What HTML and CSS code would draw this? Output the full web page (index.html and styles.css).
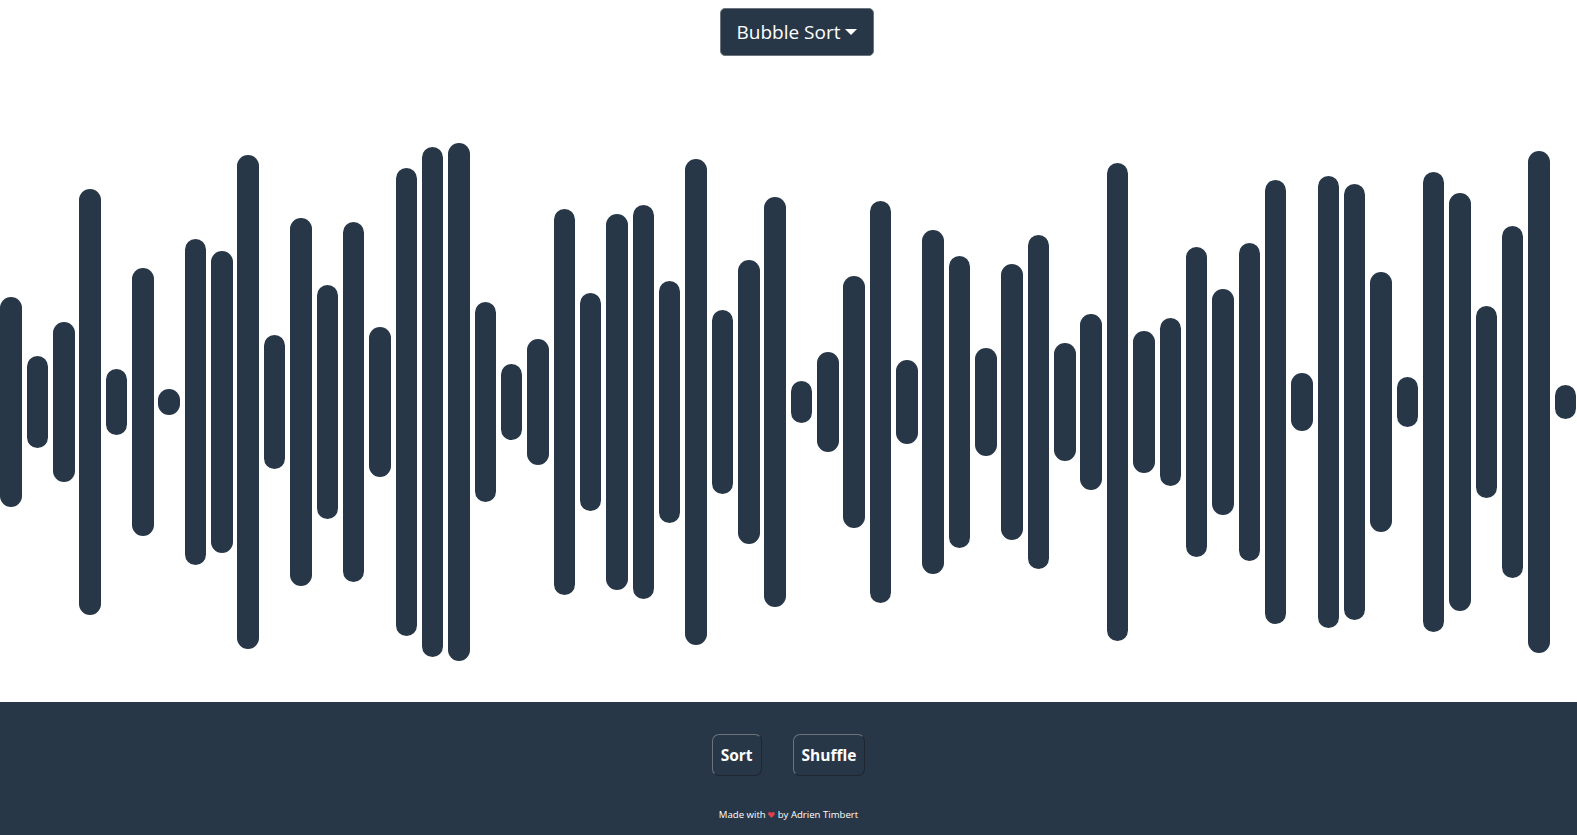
FILE: index.html
```html
<!DOCTYPE html>
<html lang="en">
<head>
    <meta charset="UTF-8">
    <meta name="viewport" content="width=device-width, initial-scale=1.0">
    <title>Sorting Visualizer</title>
    <link rel="stylesheet" href="styles.css">
</head>
<body>

    <header class="top-bar">
        <button type="button" class="algo-dropdown">Bubble Sort<span class="caret"></span></button>
    </header>

    <main class="bars">
        <div class="bar" style="--v: 25"></div>
        <div class="bar" style="--v: 11"></div>
        <div class="bar" style="--v: 19"></div>
        <div class="bar" style="--v: 51"></div>
        <div class="bar" style="--v: 8"></div>
        <div class="bar" style="--v: 32"></div>
        <div class="bar" style="--v: 3"></div>
        <div class="bar" style="--v: 39"></div>
        <div class="bar" style="--v: 36"></div>
        <div class="bar" style="--v: 59"></div>
        <div class="bar" style="--v: 16"></div>
        <div class="bar" style="--v: 44"></div>
        <div class="bar" style="--v: 28"></div>
        <div class="bar" style="--v: 43"></div>
        <div class="bar" style="--v: 18"></div>
        <div class="bar" style="--v: 56"></div>
        <div class="bar" style="--v: 61"></div>
        <div class="bar" style="--v: 62"></div>
        <div class="bar" style="--v: 24"></div>
        <div class="bar" style="--v: 9"></div>
        <div class="bar" style="--v: 15"></div>
        <div class="bar" style="--v: 46"></div>
        <div class="bar" style="--v: 26"></div>
        <div class="bar" style="--v: 45"></div>
        <div class="bar" style="--v: 47"></div>
        <div class="bar" style="--v: 29"></div>
        <div class="bar" style="--v: 58"></div>
        <div class="bar" style="--v: 22"></div>
        <div class="bar" style="--v: 34"></div>
        <div class="bar" style="--v: 49"></div>
        <div class="bar" style="--v: 5"></div>
        <div class="bar" style="--v: 12"></div>
        <div class="bar" style="--v: 30"></div>
        <div class="bar" style="--v: 48"></div>
        <div class="bar" style="--v: 10"></div>
        <div class="bar" style="--v: 41"></div>
        <div class="bar" style="--v: 35"></div>
        <div class="bar" style="--v: 13"></div>
        <div class="bar" style="--v: 33"></div>
        <div class="bar" style="--v: 40"></div>
        <div class="bar" style="--v: 14"></div>
        <div class="bar" style="--v: 21"></div>
        <div class="bar" style="--v: 57"></div>
        <div class="bar" style="--v: 17"></div>
        <div class="bar" style="--v: 20"></div>
        <div class="bar" style="--v: 37"></div>
        <div class="bar" style="--v: 27"></div>
        <div class="bar" style="--v: 38"></div>
        <div class="bar" style="--v: 53"></div>
        <div class="bar" style="--v: 7"></div>
        <div class="bar" style="--v: 54"></div>
        <div class="bar" style="--v: 52"></div>
        <div class="bar" style="--v: 31"></div>
        <div class="bar" style="--v: 6"></div>
        <div class="bar" style="--v: 55"></div>
        <div class="bar" style="--v: 50"></div>
        <div class="bar" style="--v: 23"></div>
        <div class="bar" style="--v: 42"></div>
        <div class="bar" style="--v: 60"></div>
        <div class="bar" style="--v: 4"></div>
    </main>

    <footer class="footer">
        <div class="actions">
            <button type="button" class="action-btn">Sort</button>
            <button type="button" class="action-btn">Shuffle</button>
        </div>
        <p class="credit">Made with
            <svg class="heart" viewBox="0 0 8 7" width="7" height="6"><path d="M4 7 .6 3.6C-.6 2.3.2 0 2 0c.9 0 1.6.5 2 1.2C4.400.5 5.100 0 6 0c1.800 0 2.600 2.300 1.400 3.600z"/></svg>
            by Adrien Timbert</p>
    </footer>

</body>
</html>
```

FILE: styles.css
```css
html, body {
    height: 100%;
}

body {
    font-family: "Open Sans", "Noto Sans", Arial, sans-serif;
    background-color: #fff;
    display: flex;
    flex-direction: column;
    margin: 0;
    overflow: hidden;
}

.top-bar {
    display: flex;
    justify-content: center;
    align-items: flex-start;
    height: 94px;
    padding-top: 8px;
}

.algo-dropdown {
    display: flex;
    align-items: center;
    height: 48px;
    margin-left: 17px;
    padding: 0 16px;
    background-color: #283747;
    color: #fff;
    border: 1px solid #6c757d;
    border-radius: 5px;
    font-family: inherit;
    font-size: 19px;
}

.caret {
    margin-left: 5px;
    border-top: 6px solid #fff;
    border-left: 6px solid transparent;
    border-right: 6px solid transparent;
}

.bars {
    flex: 1;
    display: flex;
    justify-content: space-between;
    align-items: center;
    padding-left: 0.4px;
}

.bar {
    width: 21.5px;
    height: calc(var(--v) * 8.37px);
    background-color: #283747;
    border-radius: 11px;
}

.footer {
    display: flex;
    flex-direction: column;
    align-items: center;
    height: 133px;
    padding-top: 32px;
    box-sizing: border-box;
    background-color: #283747;
    color: #fff;
}

.actions {
    display: flex;
    gap: 31px;
}

.action-btn {
    min-width: 49px;
    height: 42px;
    padding: 0 8px;
    background-color: #283747;
    color: #fff;
    border: 1px solid;
    border-color: #6c7278 #1f2630 #1f2630 #6c7278;
    border-radius: 7px;
    font-family: inherit;
    font-size: 15.5px;
    font-weight: 700;
}

.credit {
    margin: 32px 0 0;
    font-size: 9.6px;
}

.heart {
    fill: #d9404f;
}
```
